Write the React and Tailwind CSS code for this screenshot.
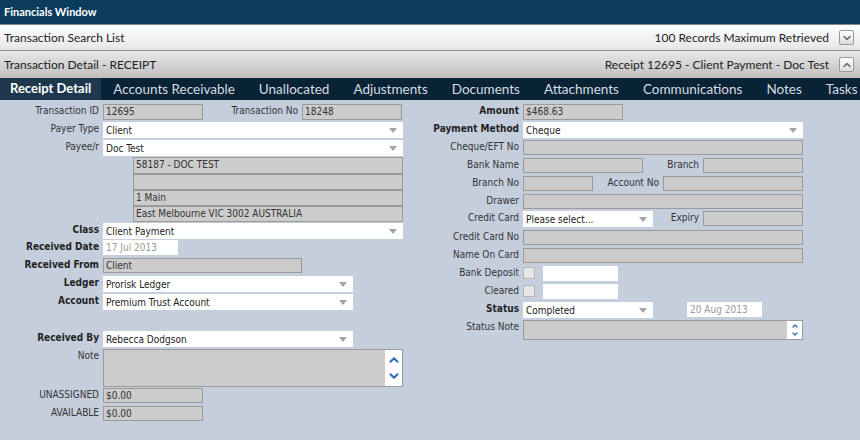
import { ChevronDown, ChevronUp } from "lucide-react";

const formFont = { fontFamily: '"DejaVu Sans Condensed", "DejaVu Sans", sans-serif' };

function Arrow() {
    return (
        <svg width="8" height="5" viewBox="0 0 8 5" className="shrink-0">
            <path d="M0 0 H8 L4 5 Z" fill="#a3a3a3" />
        </svg>
    );
}

function Label({ children, bold, className = "w-[103px]" }) {
    return (
        <div
            className={`${className} shrink-0 text-right pr-[4px] leading-[14px] whitespace-nowrap ${
                bold ? "font-bold text-[#1f1f1f]" : "text-[#333]"
            }`}
        >
            {children}
        </div>
    );
}

function Field({ value = "", w, h = "h-[15px]" }) {
    return (
        <div
            className={`${w} ${h} shrink-0 bg-[#cccccc] border border-[#9a9a9a] pl-[2px] leading-[14px] text-[#333] overflow-hidden whitespace-nowrap`}
        >
            {value}
        </div>
    );
}

function Select({ value, w }) {
    return (
        <div className={`${w} h-[16px] shrink-0 bg-white flex items-center justify-between pl-[3px] pr-[6px] text-[#222]`}>
            <span className="whitespace-nowrap">{value}</span>
            <Arrow />
        </div>
    );
}

function DateBox({ value, w = "w-[75px]" }) {
    return (
        <div className={`${w} h-[15px] shrink-0 bg-white pl-[3px] leading-[15px] text-[#9a9a9a]`}>{value}</div>
    );
}

function Row({ children, className = "" }) {
    return <div className={`flex items-start ${className}`}>{children}</div>;
}

function BarButton({ up }) {
    return (
        <div className="w-[15px] h-[15px] rounded-[2px] border border-[#9a9a9a] bg-gradient-to-b from-white to-[#dedede] flex items-center justify-center">
            {up ? (
                <ChevronUp className="w-[12px] h-[12px] text-[#666]" strokeWidth={3} />
            ) : (
                <ChevronDown className="w-[12px] h-[12px] text-[#666]" strokeWidth={3} />
            )}
        </div>
    );
}

const tabs = [
    "Accounts Receivable",
    "Unallocated",
    "Adjustments",
    "Documents",
    "Attachments",
    "Communications",
    "Notes",
    "Tasks",
];

export default function App() {
    return (
        <div className="w-[860px] h-[440px] overflow-hidden flex flex-col bg-[#c5cedd]">
            {/* Window title */}
            <div
                className="h-[24px] shrink-0 bg-[#0a3c5c] text-white font-bold text-[11px] flex items-center px-[4px]"
                style={{ fontFamily: "Lato, sans-serif" }}
            >
                Financials Window
            </div>

            {/* Search list bar */}
            <div
                className="h-[27px] shrink-0 border-t border-[#7d8894] border-b border-b-[#8f8f8f] bg-gradient-to-b from-white to-[#e6e6e6] flex items-center justify-between pl-[4px] pr-[6px] text-[12px] text-[#222]"
                style={{ fontFamily: "Lato, sans-serif" }}
            >
                <span>Transaction Search List</span>
                <div className="flex items-center gap-[10px]">
                    <span>100 Records Maximum Retrieved</span>
                    <BarButton />
                </div>
            </div>

            {/* Detail bar */}
            <div
                className="h-[27px] shrink-0 bg-gradient-to-b from-[#e8e8e8] to-[#bfbfbf] flex items-center justify-between pl-[4px] pr-[6px] text-[12px] text-[#222]"
                style={{ fontFamily: "Lato, sans-serif" }}
            >
                <span>Transaction Detail - RECEIPT</span>
                <div className="flex items-center gap-[10px]">
                    <span>Receipt 12695 - Client Payment - Doc Test</span>
                    <BarButton up />
                </div>
            </div>

            {/* Tabs */}
            <div
                className="h-[22px] shrink-0 bg-[#082236] flex items-stretch text-[13.5px] text-[#d6dce2] whitespace-nowrap overflow-hidden"
                style={{ fontFamily: "Lato, sans-serif" }}
            >
                <div className="bg-[#1d384d] text-white font-bold text-[13px] px-[10px] flex items-center">Receipt Detail</div>
                {tabs.map((t) => (
                    <div key={t} className="px-[12px] flex items-center">
                        {t}
                    </div>
                ))}
            </div>

            {/* Form body */}
            <div className="flex-1 flex pt-[4px] text-[10px]" style={formFont}>
                {/* Left column */}
                <div className="w-[420px] shrink-0 flex flex-col">
                    <Row>
                        <Label>Transaction ID</Label>
                        <Field value="12695" w="w-[100px]" h="h-[16px]" />
                        <Label className="w-[99px]">Transaction No</Label>
                        <Field value="18248" w="w-[100px]" h="h-[16px]" />
                    </Row>
                    <Row className="mt-[2px]">
                        <Label>Payer Type</Label>
                        <Select value="Client" w="w-[300px]" />
                    </Row>
                    <Row className="mt-[2px]">
                        <Label>Payee/r</Label>
                        <Select value="Doc Test" w="w-[300px]" />
                    </Row>
                    <div className="mt-[1px] ml-[133px] w-[270px] flex flex-col">
                        <Field value="58187 - DOC TEST" w="w-full" h="h-[17px]" />
                        <Field value="" w="w-full" h="h-[16px]" />
                        <Field value="1 Main" w="w-full" h="h-[16px]" />
                        <Field value="East Melbourne VIC 3002 AUSTRALIA" w="w-full" h="h-[16px]" />
                    </div>
                    <Row className="mt-[1px]">
                        <Label bold>Class</Label>
                        <Select value="Client Payment" w="w-[300px]" />
                    </Row>
                    <Row className="mt-[1px]">
                        <Label bold>Received Date</Label>
                        <DateBox value="17 Jul 2013" />
                    </Row>
                    <Row className="mt-[3px]">
                        <Label bold>Received From</Label>
                        <Field value="Client" w="w-[199px]" />
                    </Row>
                    <Row className="mt-[3px]">
                        <Label bold>Ledger</Label>
                        <Select value="Prorisk Ledger" w="w-[250px]" />
                    </Row>
                    <Row className="mt-[2px]">
                        <Label bold>Account</Label>
                        <Select value="Premium Trust Account" w="w-[250px]" />
                    </Row>
                    <Row className="mt-[21px]">
                        <Label bold>Received By</Label>
                        <Select value="Rebecca Dodgson" w="w-[250px]" />
                    </Row>
                    <Row className="mt-[2px]">
                        <Label>Note</Label>
                        <div className="w-[300px] h-[38px] bg-[#cccccc] border border-[#9a9a9a] flex justify-end">
                            <div className="w-[17px] bg-white flex flex-col items-center justify-between py-[3px]">
                                <ChevronUp className="w-[14px] h-[14px] text-[#2f6db3]" strokeWidth={3.5} />
                                <ChevronDown className="w-[14px] h-[14px] text-[#2f6db3]" strokeWidth={3.5} />
                            </div>
                        </div>
                    </Row>
                    <Row className="mt-[1px]">
                        <Label>UNASSIGNED</Label>
                        <Field value="$0.00" w="w-[100px]" />
                    </Row>
                    <Row className="mt-[3px]">
                        <Label>AVAILABLE</Label>
                        <Field value="$0.00" w="w-[100px]" />
                    </Row>
                </div>

                {/* Right column */}
                <div className="flex-1 flex flex-col">
                    <Row>
                        <Label bold>Amount</Label>
                        <Field value="$468.63" w="w-[100px]" h="h-[16px]" />
                    </Row>
                    <Row className="mt-[2px]">
                        <Label bold>Payment Method</Label>
                        <Select value="Cheque" w="w-[280px]" />
                    </Row>
                    <Row className="mt-[2px]">
                        <Label>Cheque/EFT No</Label>
                        <Field w="w-[280px]" />
                    </Row>
                    <Row className="mt-[3px]">
                        <Label>Bank Name</Label>
                        <Field w="w-[120px]" />
                        <Label className="w-[60px]">Branch</Label>
                        <Field w="w-[100px]" />
                    </Row>
                    <Row className="mt-[3px]">
                        <Label>Branch No</Label>
                        <Field w="w-[70px]" />
                        <Label className="w-[70px]">Account No</Label>
                        <Field w="w-[140px]" />
                    </Row>
                    <Row className="mt-[3px]">
                        <Label>Drawer</Label>
                        <Field w="w-[280px]" />
                    </Row>
                    <Row className="mt-[2px]">
                        <Label>Credit Card</Label>
                        <Select value="Please select..." w="w-[130px]" />
                        <Label className="w-[50px]">Expiry</Label>
                        <Field w="w-[100px]" />
                    </Row>
                    <Row className="mt-[3px]">
                        <Label>Credit Card No</Label>
                        <Field w="w-[280px]" />
                    </Row>
                    <Row className="mt-[3px]">
                        <Label>Name On Card</Label>
                        <Field w="w-[280px]" />
                    </Row>
                    <Row className="mt-[3px]">
                        <Label>Bank Deposit</Label>
                        <div className="w-[12px] h-[12px] mt-[1px] bg-[#e6e6e6] border border-[#b5b5b5]" />
                        <div className="w-[75px] h-[15px] ml-[8px] bg-white" />
                    </Row>
                    <Row className="mt-[3px]">
                        <Label>Cleared</Label>
                        <div className="w-[12px] h-[12px] mt-[1px] bg-[#e6e6e6] border border-[#b5b5b5]" />
                        <div className="w-[75px] h-[15px] ml-[8px] bg-white" />
                    </Row>
                    <Row className="mt-[3px]">
                        <Label bold>Status</Label>
                        <Select value="Completed" w="w-[130px]" />
                        <div className="ml-[34px]">
                            <DateBox value="20 Aug 2013" />
                        </div>
                    </Row>
                    <Row className="mt-[2px]">
                        <Label>Status Note</Label>
                        <div className="w-[280px] h-[20px] bg-[#cccccc] border border-[#9a9a9a] flex justify-end">
                            <div className="w-[15px] bg-white flex flex-col items-center justify-center">
                                <ChevronUp className="w-[8px] h-[8px] text-[#2f6db3]" strokeWidth={4} />
                                <ChevronDown className="w-[8px] h-[8px] text-[#2f6db3]" strokeWidth={4} />
                            </div>
                        </div>
                    </Row>
                </div>
            </div>
        </div>
    );
}
